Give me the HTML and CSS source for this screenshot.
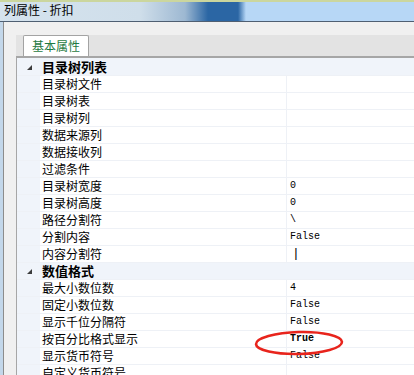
FILE: index.html
```html
<!DOCTYPE html>
<html lang="zh">
<head>
<meta charset="utf-8">
<title>列属性 - 折扣</title>
<link rel="stylesheet" href="styles.css">
</head>
<body>
<div class="titlebar"><span class="title">列属性 - 折扣</span></div>
<div class="window">
  <div class="content">
    <div class="tabstrip"><div class="tab">基本属性</div></div>
    <div class="grid">
      <div class="row cat"><div class="margin"><span class="tri"></span></div><div class="label">目录树列表</div></div>
      <div class="row"><div class="margin"></div><div class="label">目录树文件</div><div class="value"></div></div>
      <div class="row"><div class="margin"></div><div class="label">目录树表</div><div class="value"></div></div>
      <div class="row"><div class="margin"></div><div class="label">目录树列</div><div class="value"></div></div>
      <div class="row"><div class="margin"></div><div class="label">数据来源列</div><div class="value"></div></div>
      <div class="row"><div class="margin"></div><div class="label">数据接收列</div><div class="value"></div></div>
      <div class="row"><div class="margin"></div><div class="label">过滤条件</div><div class="value"></div></div>
      <div class="row"><div class="margin"></div><div class="label">目录树宽度</div><div class="value">0</div></div>
      <div class="row"><div class="margin"></div><div class="label">目录树高度</div><div class="value">0</div></div>
      <div class="row"><div class="margin"></div><div class="label">路径分割符</div><div class="value">\</div></div>
      <div class="row"><div class="margin"></div><div class="label">分割内容</div><div class="value">False</div></div>
      <div class="row"><div class="margin"></div><div class="label">内容分割符</div><div class="value bar">|</div></div>
      <div class="row cat"><div class="margin"><span class="tri"></span></div><div class="label">数值格式</div></div>
      <div class="row"><div class="margin"></div><div class="label">最大小数位数</div><div class="value">4</div></div>
      <div class="row"><div class="margin"></div><div class="label">固定小数位数</div><div class="value">False</div></div>
      <div class="row"><div class="margin"></div><div class="label">显示千位分隔符</div><div class="value">False</div></div>
      <div class="row"><div class="margin"></div><div class="label">按百分比格式显示</div><div class="value strong">True</div></div>
      <div class="row"><div class="margin"></div><div class="label">显示货币符号</div><div class="value">False</div></div>
      <div class="row"><div class="margin"></div><div class="label">自定义货币符号</div><div class="value"></div></div>
    </div>
  </div>
</div>
<svg class="circle" width="96" height="32" viewBox="0 0 96 32" aria-hidden="true">
  <ellipse cx="47" cy="15" rx="43" ry="11" fill="none" stroke="#e8241c" stroke-width="2.6" transform="rotate(-1.5 47 15)"/>
</svg>
</body>
</html>
```

FILE: styles.css
```css
html, body {
  margin: 0;
  padding: 0;
  width: 414px;
  height: 375px;
  overflow: hidden;
  background: #f0f0f0;
  font-family: "Noto Sans CJK SC", "Noto Sans", sans-serif;
  color: #000;
}

.titlebar {
  height: 19px;
  border-top: 2px solid #cbd69e;
  border-bottom: 1px solid #4f5f72;
  background: linear-gradient(90deg, #d5e3ee 0, #cfdeea 140px, #9db8d2 185px, #2b66a4 208px, #2b66a4 238px, #b7d7f6 246px, #b7d7f6 100%);
  padding-left: 4px;
  display: flex;
  align-items: center;
}

.title {
  font-size: 12px;
  line-height: 14px;
  margin-top: -4px;
}

.window {
  height: 353px;
  border-left: 3px solid #c3d7ea;
  display: flex;
}

.content {
  flex: 1;
  border-left: 1px solid #8c8c8c;
  background: #f0f0f0;
  padding: 13px 0 0 12px;
  display: flex;
  flex-direction: column;
}

.tabstrip {
  height: 24px;
  background: #e3e3e3;
  display: flex;
  align-items: flex-end;
  padding-left: 7px;
}

.tab {
  height: 21px;
  box-sizing: border-box;
  padding: 0 8px;
  background: #fff;
  border: 1px solid #a3a3a3;
  border-bottom: none;
  border-radius: 2px 2px 0 0;
  color: #1f7a42;
  font-size: 12px;
  line-height: 20px;
}

.grid {
  flex: 1;
  border-top: 2px solid #a6a6a6;
  border-left: 1px solid #a6a6a6;
  padding-top: 1px;
  background: #f0f4fa;
}

.row {
  display: flex;
  height: 17px;
  box-sizing: border-box;
  border-bottom: 1px solid #eef1f6;
}

.margin {
  width: 23px;
  background: #f0f4fa;
  position: relative;
}

.label {
  width: 246px;
  padding-left: 2px;
  box-sizing: border-box;
  background: #fff;
  font-size: 12px;
  line-height: 16px;
  white-space: nowrap;
}

.value {
  flex: 1;
  border-left: 1px solid #eef1f6;
  background: #fff;
  padding-left: 3px;
  font-family: "Liberation Mono", "DejaVu Sans Mono", monospace;
  font-size: 10px;
  line-height: 16px;
}

.value.strong {
  font-weight: bold;
}

.value.bar {
  padding-left: 5px;
  font-size: 13px;
}

.cat .label {
  background: #f0f4fa;
  font-weight: bold;
  font-size: 13px;
  flex: 1;
}

.tri {
  position: absolute;
  left: 10px;
  top: 6px;
  width: 0;
  height: 0;
  border-left: 5px solid transparent;
  border-bottom: 5px solid #3c3c3c;
}

.circle {
  position: absolute;
  left: 252px;
  top: 328px;
}
```
